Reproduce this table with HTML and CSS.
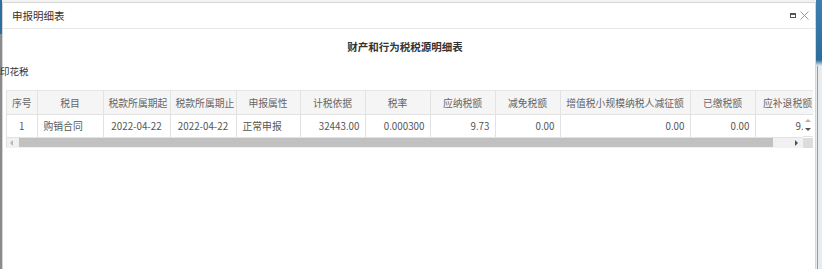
FILE: index.html
```html
<!DOCTYPE html>
<html lang="zh">
<head>
<meta charset="utf-8">
<link rel="stylesheet" href="styles.css">
</head>
<body>
<div class="page">
  <div class="edge edge-left"></div>
  <div class="dialog">
    <div class="titlebar">
      <span class="title">申报明细表</span>
      <div class="tools">
        <span class="max-icon"></span>
        <svg class="close-icon" width="9" height="9" viewBox="0 0 9 9"><path d="M0.5 0.5 L8.5 8.5 M8.5 0.5 L0.5 8.5" stroke="#999" stroke-width="1" fill="none"/></svg>
      </div>
    </div>
    <div class="content">
      <div class="heading">财产和行为税税源明细表</div>
      <div class="section-label">印花税</div>
      <div class="grid">
        <div class="head-view">
          <table class="tbl">
            <colgroup>
              <col class="c-seq"><col class="c-item"><col class="c-date"><col class="c-date2"><col class="c-attr"><col class="c-n"><col class="c-n"><col class="c-n"><col class="c-n"><col class="c-wide"><col class="c-n"><col class="c-n">
            </colgroup>
            <tr class="hrow">
              <th>序号</th><th>税目</th><th>税款所属期起</th><th>税款所属期止</th><th>申报属性</th><th>计税依据</th><th>税率</th><th>应纳税额</th><th>减免税额</th><th>增值税小规模纳税人减征额</th><th>已缴税额</th><th>应补退税额</th>
            </tr>
          </table>
        </div>
        <div class="body-line">
          <div class="body-view">
            <table class="tbl">
              <colgroup>
                <col class="c-seq"><col class="c-item"><col class="c-date"><col class="c-date2"><col class="c-attr"><col class="c-n"><col class="c-n"><col class="c-n"><col class="c-n"><col class="c-wide"><col class="c-n"><col class="c-n">
              </colgroup>
              <tr class="drow">
                <td class="ctr">1</td><td class="lft">购销合同</td><td class="ctr">2022-04-22</td><td class="ctr">2022-04-22</td><td class="lft">正常申报</td><td class="rgt">32443.00</td><td class="rgt">0.000300</td><td class="rgt">9.73</td><td class="rgt">0.00</td><td class="rgt">0.00</td><td class="rgt">0.00</td><td class="rgt">9.73</td>
              </tr>
            </table>
          </div>
          <div class="vscroll">
            <span class="arr-up"></span>
            <span class="arr-down"></span>
          </div>
        </div>
        <div class="scroll-line">
          <div class="hscroll">
            <span class="arr-left"></span>
            <span class="thumb"></span>
            <span class="arr-right"></span>
          </div>
          <div class="corner"></div>
        </div>
      </div>
    </div>
  </div>
  <div class="edge edge-right"><span class="line"></span></div>
</div>
</body>
</html>
```
FILE: styles.css
```css
* { box-sizing: border-box; }
html, body { margin: 0; padding: 0; }
body {
  width: 822px;
  height: 269px;
  overflow: hidden;
  background: #f2f2f2;
  font-family: "Noto Sans CJK SC", "Microsoft YaHei", sans-serif;
}
.page {
  display: flex;
  height: 269px;
}
.edge { height: 100%; }
.edge-left {
  width: 2px;
  background: linear-gradient(#2e6e9e 0, #2e6e9e 34px, #8b8b8b 34px, #8b8b8b 100%);
}
.edge-right {
  flex: 1;
  display: flex;
  background: linear-gradient(#3d7fae 0, #2c6d9c 60px, #e9ecef 66px, #e9ecef 100%);
}
.edge-right .line {
  width: 1px;
  margin-left: 1px;
  background: #9a9a9a;
  margin-top: 66px;
}
.dialog {
  width: 814px;
  margin-top: 2px;
  background: #fff;
  border: 1px solid #d6d6d6;
  border-bottom: none;
  display: flex;
  flex-direction: column;
}
.titlebar {
  height: 26px;
  border-bottom: 1px solid #e8e8e8;
  display: flex;
  align-items: center;
  justify-content: space-between;
  padding: 0 6px 1px 9px;
}
.title {
  font-size: 10.5px;
  color: #333;
}
.tools {
  display: flex;
  align-items: center;
  gap: 4px;
}
.max-icon {
  width: 6px;
  height: 5px;
  border: 1px solid #555;
  border-top-width: 2px;
}
.close-icon { display: block; }
.content {
  display: flex;
  flex-direction: column;
}
.heading {
  margin-top: 11px;
  padding-right: 8px;
  text-align: center;
  font-size: 10.5px;
  font-weight: bold;
  color: #333;
  line-height: 14px;
}
.section-label {
  margin-top: 11px;
  margin-left: -3px;
  font-size: 9.5px;
  color: #333;
  line-height: 12px;
}
.grid {
  margin-top: 13px;
  margin-left: 3px;
  width: 807px;
  border-left: 1px solid #e2e2e2;
}
.head-view, .body-view {
  overflow: hidden;
}
.head-view { width: 806px; }
.body-line { display: flex; }
.body-view { width: 796px; }
.tbl {
  border-collapse: collapse;
  table-layout: fixed;
  width: 813px;
  font-size: 9.8px;
}
.c-seq { width: 30px; }
.c-item { width: 66px; }
.c-date { width: 67px; }
.c-date2 { width: 66px; }
.c-attr { width: 64px; }
.c-n { width: 65px; }
.c-wide { width: 130px; }
.tbl th, .tbl td {
  border-right: 1px solid #e2e2e2;
  border-bottom: 1px solid #e2e2e2;
  white-space: nowrap;
  overflow: hidden;
  padding: 0 5px;
}
.hrow th {
  height: 24px;
  background: #f5f5f5;
  border-top: 1px solid #e6e6e6;
  font-weight: normal;
  color: #666;
  text-align: center;
}
.drow td {
  height: 22px;
  color: #555;
}
.ctr { text-align: center; }
.lft { text-align: left; }
.rgt { text-align: right; }
.drow td.lft { padding-left: 6px; }
.vscroll {
  width: 10px;
  height: 22px;
  background: #fff;
  display: flex;
  flex-direction: column;
  align-items: center;
  justify-content: space-between;
  padding: 4px 0 3px;
  border-bottom: 1px solid #e2e2e2;
}
.arr-up {
  width: 0; height: 0;
  border-left: 3px solid transparent;
  border-right: 3px solid transparent;
  border-bottom: 3px solid #b0b0b0;
}
.arr-down {
  width: 0; height: 0;
  border-left: 3px solid transparent;
  border-right: 3px solid transparent;
  border-top: 3px solid #555;
  margin-bottom: 2px;
}
.scroll-line {
  display: flex;
  height: 10px;
}
.hscroll {
  width: 796px;
  background: #f1f1f1;
  display: flex;
  align-items: center;
}
.arr-left {
  width: 0; height: 0;
  margin-left: 3px;
  border-top: 3px solid transparent;
  border-bottom: 3px solid transparent;
  border-right: 3px solid #b8b8b8;
}
.thumb {
  margin-left: 6px;
  width: 754px;
  height: 9px;
  background: #c1c1c1;
}
.arr-right {
  width: 0; height: 0;
  margin-left: 22px;
  border-top: 3px solid transparent;
  border-bottom: 3px solid transparent;
  border-left: 3px solid #505050;
}
.corner {
  width: 10px;
  background: #dcdcdc;
}
```
